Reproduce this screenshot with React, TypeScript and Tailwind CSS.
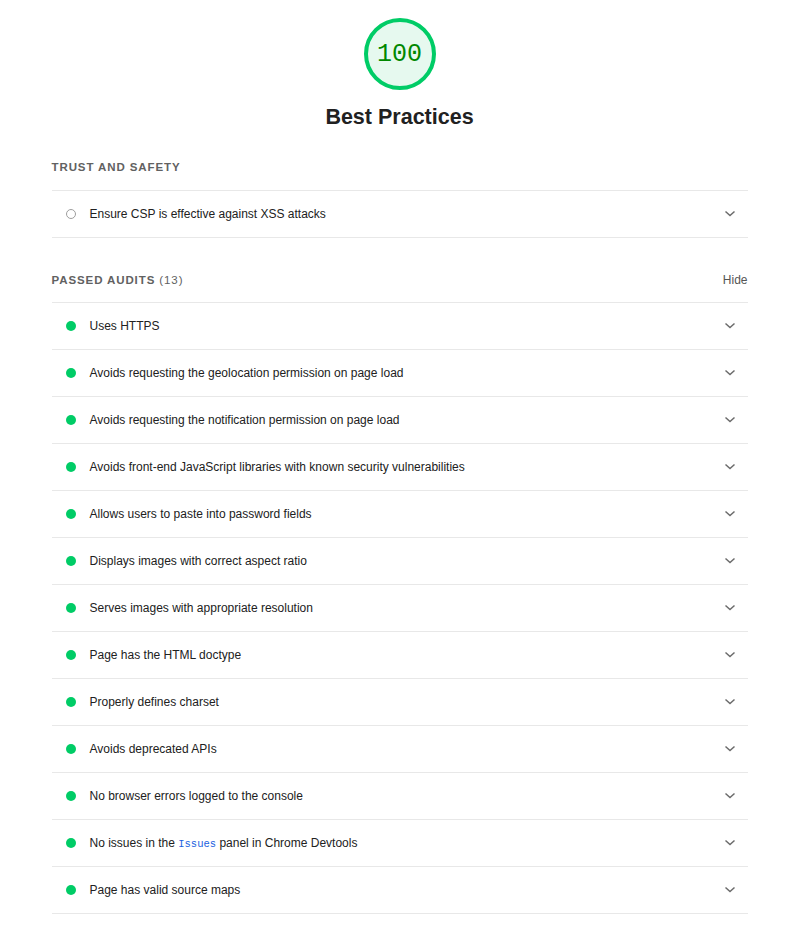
import React from "react";

const font = { fontFamily: '"Liberation Sans", Arial, Helvetica, sans-serif' };

function Chevron() {
  return (
    <svg width="12" height="8" viewBox="0 0 12 8" className="shrink-0">
      <polyline points="1.5,1.5 6,5.5 10.5,1.5" fill="none" stroke="#6b6b6b" strokeWidth="1.5" />
    </svg>
  );
}

function Row({ children, pass = true }: { children: React.ReactNode; pass?: boolean }) {
  return (
    <div className="flex h-[47px] items-center border-b border-[#e8e8e8] pl-[14px] pr-[12px]">
      {pass ? (
        <span className="h-[10px] w-[10px] shrink-0 rounded-full bg-[#0c6]" />
      ) : (
        <span className="h-[10px] w-[10px] shrink-0 rounded-full border-[1.5px] border-[#9e9e9e]" />
      )}
      <div className="ml-[14px] flex-1 text-[12px] leading-[16px] text-[#212121]">{children}</div>
      <Chevron />
    </div>
  );
}

const passed: React.ReactNode[] = [
  "Uses HTTPS",
  "Avoids requesting the geolocation permission on page load",
  "Avoids requesting the notification permission on page load",
  "Avoids front-end JavaScript libraries with known security vulnerabilities",
  "Allows users to paste into password fields",
  "Displays images with correct aspect ratio",
  "Serves images with appropriate resolution",
  "Page has the HTML doctype",
  "Properly defines charset",
  "Avoids deprecated APIs",
  "No browser errors logged to the console",
  <>
    No issues in the{" "}
    <span
      className="text-[10.5px] text-[#1a5fe0]"
      style={{ fontFamily: '"Liberation Mono", "Courier New", monospace' }}
    >
      Issues
    </span>{" "}
    panel in Chrome Devtools
  </>,
  "Page has valid source maps",
];

export default function App() {
  return (
    <div className="min-h-[932px] w-full bg-white" style={font}>
      <div className="mx-auto w-[696px] pt-[18px]">
        <div className="flex flex-col items-center">
          <div className="flex h-[72px] w-[72px] items-center justify-center rounded-full border-[4.5px] border-[#0c6] bg-[#e6f9ef]">
            <span
              className="text-[25px] leading-none text-[#080]"
              style={{ fontFamily: '"Liberation Mono", "Courier New", monospace' }}
            >
              100
            </span>
          </div>
          <h1 className="mt-[13px] text-[21.5px] font-bold leading-[28px] text-[#212121]">Best Practices</h1>
        </div>

        <div className="border-b border-[#e8e8e8] pb-[15px] pt-[28px] text-[11.5px] font-bold uppercase leading-[16px] tracking-[0.9px] text-[#616161]">
          Trust and Safety
        </div>
        <Row pass={false}>Ensure CSP is effective against XSS attacks</Row>

        <div className="flex items-center justify-between border-b border-[#e8e8e8] pb-[14px] pt-[34px] leading-[16px]">
          <div className="text-[11.5px] uppercase tracking-[0.9px] text-[#616161]">
            <span className="font-bold">Passed audits</span> <span>(13)</span>
          </div>
          <span className="text-[12px] text-[#555]">Hide</span>
        </div>
        {passed.map((p, i) => (
          <Row key={i}>{p}</Row>
        ))}
      </div>
    </div>
  );
}
